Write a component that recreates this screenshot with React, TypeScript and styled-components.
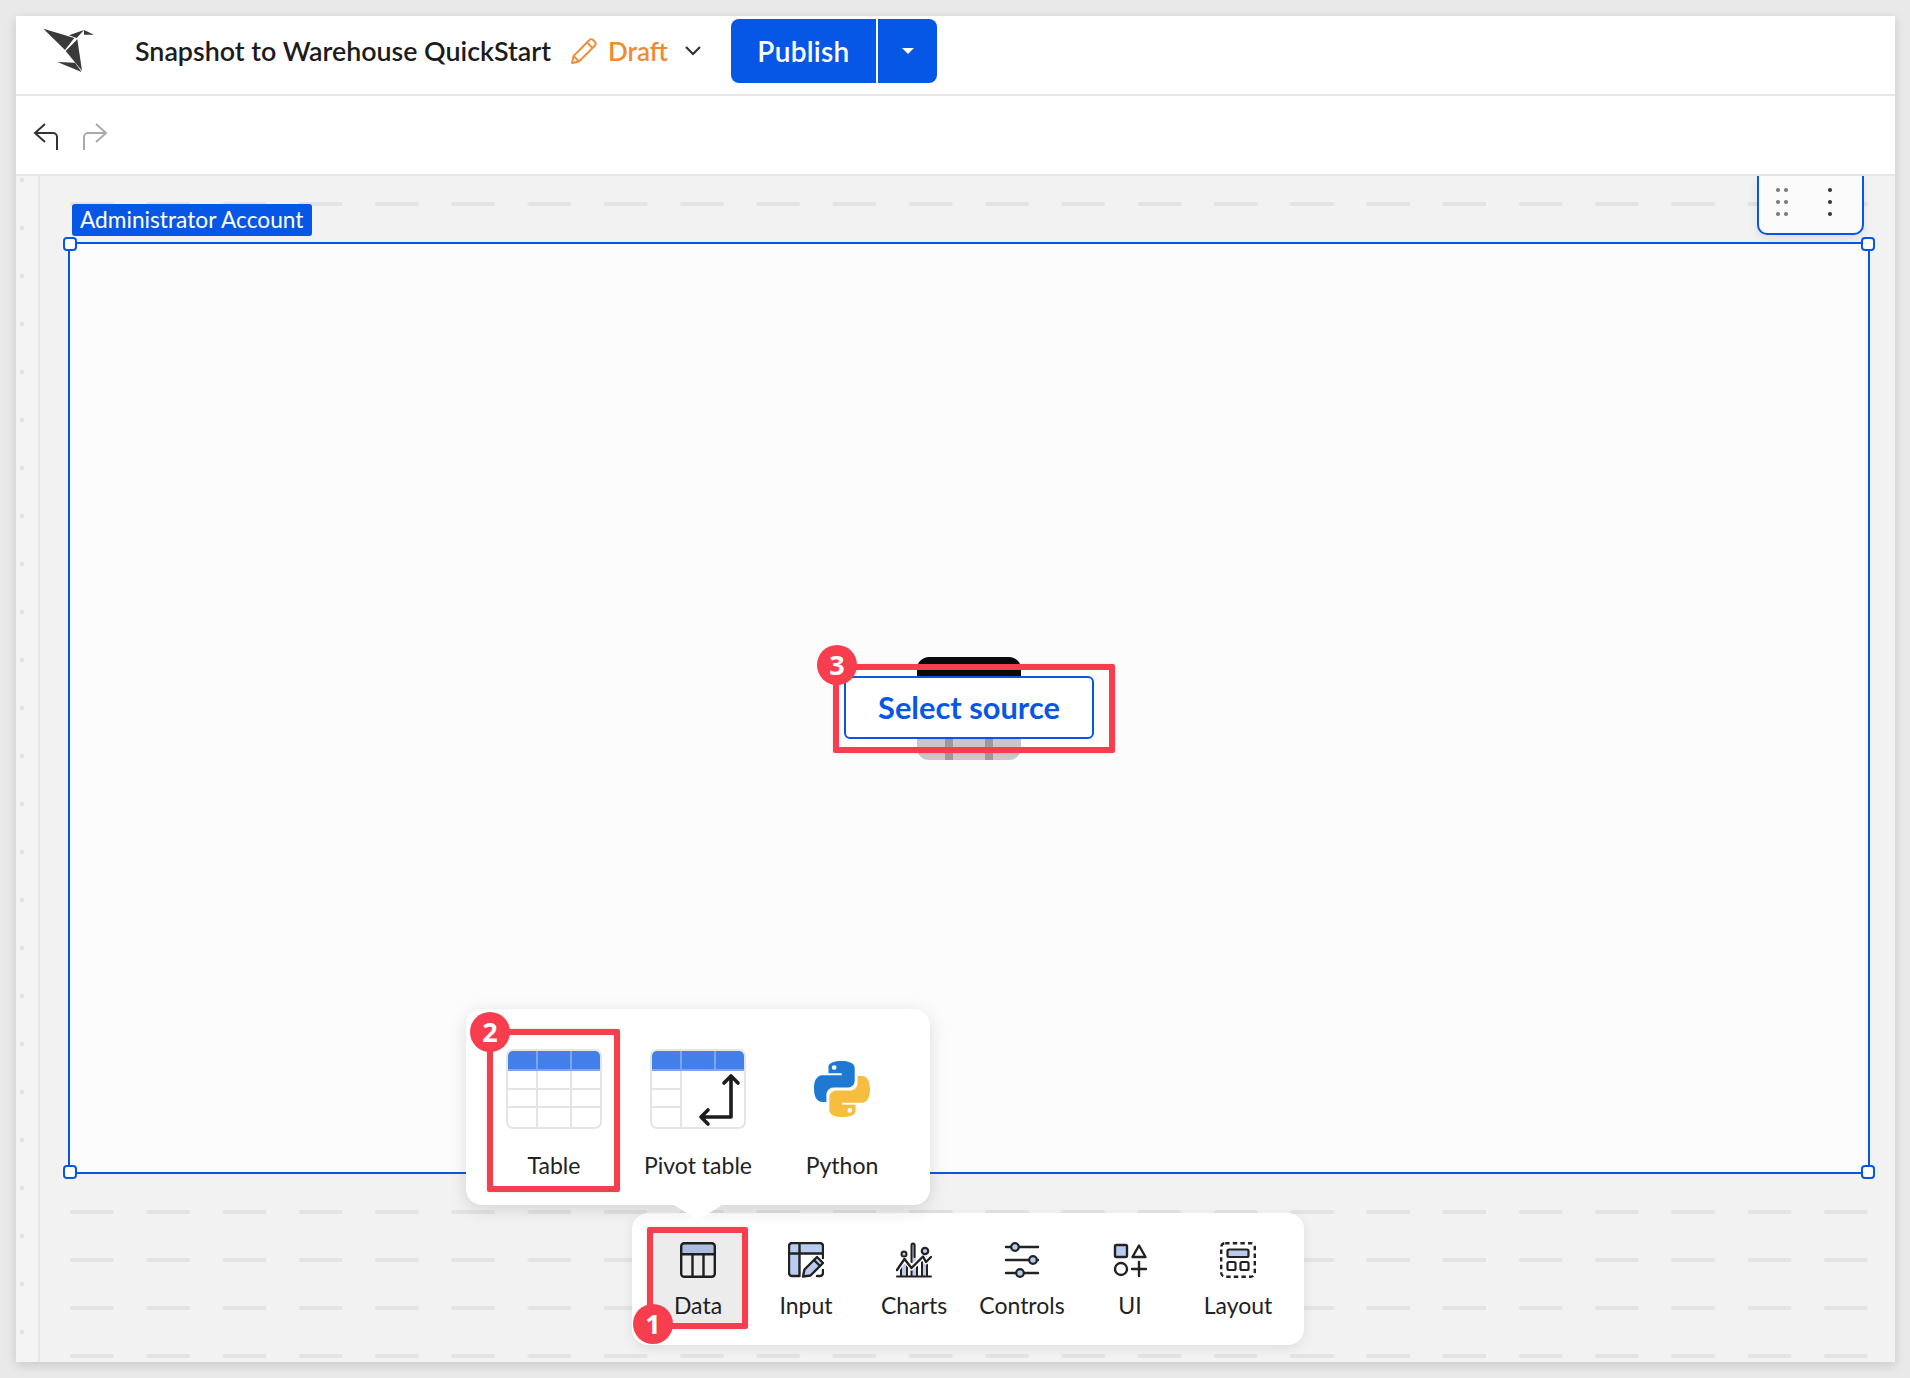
import React from "react";
import styled, { createGlobalStyle } from "styled-components";

const FONT = `"Lato", "Noto Sans", "Liberation Sans", sans-serif`;
const BLUE = "#0757e6";
const RED = "#f73e4e";
const INK = "#222222";
const TINT = "#b9ccf0";

const Global = createGlobalStyle`
  html, body { margin: 0; padding: 0; background: #e9e9e9; }
  body { font-family: ${FONT}; color: ${INK}; }
`;

const Page = styled.div`
  box-sizing: border-box;
  width: 1910px;
  height: 1378px;
  padding: 16px 15px 16px 16px;
`;
const Frame = styled.div`
  display: flex;
  flex-direction: column;
  height: 100%;
  background: #fff;
  box-shadow: 0 3px 10px rgba(0, 0, 0, 0.14);
`;
const Header = styled.header`
  box-sizing: border-box;
  display: flex;
  align-items: center;
  flex: none;
  height: 80px;
  padding: 0 0 8px 24px;
  border-bottom: 2px solid #e6e6e6;
`;
const Logo = styled.svg`
  width: 57px;
  height: 50px;
  margin-right: 38px;
`;
const Title = styled.h1`
  margin: 0;
  width: 416px;
  font-size: 26.8px;
  font-weight: 600;
  color: #1c1c1c;
  white-space: nowrap;
`;
const Pencil = styled.svg`
  width: 28px;
  height: 28px;
  margin-left: 19px;
`;
const Draft = styled.span`
  margin-left: 10px;
  width: 60px;
  font-size: 26px;
  font-weight: 600;
  color: #f08a35;
`;
const Chevron = styled.svg`
  width: 18px;
  height: 12px;
  margin-left: 16px;
`;
const PublishGroup = styled.div`
  display: flex;
  height: 64px;
  margin-left: 29px;
  border-radius: 8px;
  overflow: hidden;
  background: ${BLUE};
`;
const PublishButton = styled.button`
  width: 145px;
  border: 0;
  background: none;
  color: #fff;
  font: 600 28px ${FONT};
  letter-spacing: 0.3px;
`;
const PublishCaret = styled.button`
  display: flex;
  align-items: center;
  justify-content: center;
  width: 61px;
  padding: 0;
  border: 0;
  border-left: 2px solid #fff;
  background: none;
  &::after {
    content: "";
    border: 6px solid transparent;
    border-top-color: #fff;
    border-bottom-width: 0;
  }
`;
const ToolBar = styled.div`
  box-sizing: border-box;
  display: flex;
  align-items: center;
  flex: none;
  gap: 23px;
  height: 80px;
  padding-left: 17px;
  border-bottom: 2px solid #e6e6e6;
`;
const HistoryIcon = styled.svg`
  width: 26px;
  height: 28px;
  margin-top: 4px;
`;
const Canvas = styled.main`
  position: relative;
  display: flex;
  flex: 1;
  min-height: 0;
  background: #f2f2f2;
`;
const GridLayer = styled.svg`
  position: absolute;
  top: 0;
  left: 0;
  width: 1828px;
  height: 100%;
`;
const Ruler = styled.div`
  flex: none;
  width: 22px;
  border-right: 2px solid #e6e6e6;
  background-color: #f4f4f4;
  background-image: radial-gradient(circle at 6px 4px, #e3e3e3 2px, transparent 2.6px);
  background-size: 22px 48px;
`;
const CanvasBody = styled.div`
  position: relative;
  flex: 1;
  padding: 66px 25px 0 28px;
`;
const Card = styled.section`
  position: relative;
  box-sizing: border-box;
  display: flex;
  align-items: center;
  justify-content: center;
  height: 932px;
  background: #fcfcfc;
  border: 2px solid ${BLUE};
`;
const AccountTag = styled.div`
  position: absolute;
  top: -40px;
  left: 2px;
  box-sizing: border-box;
  width: 240px;
  height: 32px;
  padding-left: 8px;
  line-height: 31px;
  font-size: 22.7px;
  color: #fff;
  background: ${BLUE};
  border-radius: 3px;
  white-space: nowrap;
`;
const Handle = styled.span<{ $v: "top" | "bottom"; $h: "left" | "right" }>`
  position: absolute;
  ${(p) => p.$v}: -7px;
  ${(p) => p.$h}: -7px;
  box-sizing: border-box;
  width: 14px;
  height: 14px;
  background: #fff;
  border: 2px solid ${BLUE};
  border-radius: 4px;
`;
const DragTab = styled.div`
  position: absolute;
  top: -68px;
  right: 4px;
  box-sizing: border-box;
  width: 107px;
  height: 59px;
  background: #fbfbfb;
  border: 2px solid ${BLUE};
  border-top: 0;
  border-radius: 0 0 10px 10px;
  box-shadow: 0 4px 10px rgba(0, 0, 0, 0.08);
`;
const DragIcon = styled.svg`
  display: block;
  width: 103px;
  height: 57px;
`;
const SourceWrap = styled.div`
  position: relative;
  width: 250px;
  height: 63px;
  margin-top: -2px;
`;
const SourceArt = styled.svg`
  position: absolute;
  top: -19px;
  left: 73px;
  width: 104px;
  height: 103px;
`;
const SourceButton = styled.button`
  position: relative;
  box-sizing: border-box;
  width: 100%;
  height: 100%;
  padding: 0;
  background: #fff;
  border: 2px solid ${BLUE};
  border-radius: 6px;
  color: ${BLUE};
  font: 700 30.8px ${FONT};
`;
const Mark = styled.div<{ $l: number; $t: number; $w: number; $h: number; $tint?: boolean }>`
  position: absolute;
  left: ${(p) => p.$l}px;
  top: ${(p) => p.$t}px;
  width: ${(p) => p.$w}px;
  height: ${(p) => p.$h}px;
  box-sizing: border-box;
  border: 6px solid ${RED};
  border-radius: 2px;
  background: ${(p) => (p.$tint ? "rgba(0,0,0,0.075)" : "transparent")};
  box-shadow: 0 0 3px rgba(0, 0, 0, 0.12);
  pointer-events: none;
`;
const Badge = styled.span<{ $l: number; $t: number }>`
  position: absolute;
  left: ${(p) => p.$l}px;
  top: ${(p) => p.$t}px;
  width: 40px;
  height: 40px;
  border-radius: 50%;
  background: ${RED};
  color: #fff;
  font: 700 27px/40px "Open Sans", ${FONT};
  text-align: center;
`;
const Popover = styled.div`
  position: absolute;
  left: 450px;
  top: 833px;
  z-index: 2;
  box-sizing: border-box;
  display: flex;
  width: 464px;
  height: 196px;
  padding: 0 16px;
  background: #fff;
  border-radius: 16px;
  box-shadow: 0 4px 18px rgba(0, 0, 0, 0.13);
  &::after {
    content: "";
    position: absolute;
    left: 208px;
    top: 100%;
    width: 48px;
    height: 15px;
    background: #fff;
    clip-path: polygon(0 0, 100% 0, 50% 100%);
  }
`;
const Tile = styled.div`
  display: flex;
  flex-direction: column;
  align-items: center;
  width: 144px;
  padding-top: 40px;
`;
const TileArt = styled.svg`
  width: 96px;
  height: 80px;
`;
const TileLabel = styled.span`
  margin-top: 21px;
  font-size: 23px;
  line-height: 30px;
  color: #222;
`;
const Dock = styled.nav`
  position: absolute;
  left: 616px;
  top: 1037px;
  z-index: 1;
  box-sizing: border-box;
  display: flex;
  width: 672px;
  height: 132px;
  padding: 12px;
  background: #fff;
  border-radius: 16px;
  box-shadow: 0 3px 12px rgba(0, 0, 0, 0.08);
`;
const DockItem = styled.div`
  position: relative;
  display: flex;
  flex-direction: column;
  align-items: center;
  width: 108px;
  padding-top: 17px;
`;
const DockIcon = styled.svg`
  width: 36px;
  height: 36px;
`;
const DockLabel = styled.span`
  margin-top: 12px;
  font-size: 23px;
  line-height: 30px;
  color: #222;
  white-space: nowrap;
`;

const s = { fill: "none", stroke: INK, strokeWidth: 2.4, strokeLinecap: "round", strokeLinejoin: "round" } as const;

const DataGlyph = () => (
  <DockIcon viewBox="0 0 36 36">
    <rect x="1.2" y="1.2" width="33.6" height="11" fill={TINT} />
    <rect x="1.2" y="1.2" width="33.6" height="33.6" rx="3" {...s} />
    <path d="M1.2 12.2H34.8M12.5 12.2V34.8M23.5 12.2V34.8" {...s} />
  </DockIcon>
);
const InputGlyph = () => (
  <DockIcon viewBox="0 0 36 36">
    <path d="M2 2H34V11H11V34H2Z" fill={TINT} />
    <path d="M11 34H4a3 3 0 0 1-3-3V4a3 3 0 0 1 3-3h28a3 3 0 0 1 3 3v12M1 11.5H34M11.5 1V34M29 34h3a3 3 0 0 0 3-3v-3" {...s} />
    <path d="M15 34.5l1.5-7L29 15l6 6-12.5 12.5Z" fill={TINT} stroke={INK} strokeWidth="2.4" strokeLinejoin="round" />
    <path d="M26 18l6 6" {...s} />
  </DockIcon>
);
const ChartsGlyph = () => (
  <DockIcon viewBox="0 0 36 36">
    <path d="M16 2h4v32h-4ZM26 14h5v20h-5ZM6 22h5v12H6Z" fill={TINT} />
    <path d="M15.5 20V3a1.5 1.5 0 0 1 3 0V15M1 34.5H35M5 24V34M11 24V34M15.5 25V34M21 25V34M26 20V34M31 20V34" {...s} strokeWidth="2" />
    <path d="M1 28L8.5 17l7 9L27 14.5 30 20l5-5" {...s} stroke="#fff" strokeWidth="5" />
    <path d="M1 28L8.5 17l7 9L27 14.5 30 20l5-5" {...s} />
    <circle cx="29" cy="9" r="3.2" fill={TINT} stroke={INK} strokeWidth="2.2" />
    <circle cx="8" cy="12" r="2.5" fill={TINT} stroke={INK} strokeWidth="2" />
  </DockIcon>
);
const ControlsGlyph = () => (
  <DockIcon viewBox="0 0 36 36">
    <path d="M2 5H34M2 18H34M2 31H34" {...s} />
    <circle cx="11" cy="5" r="3.8" fill={TINT} stroke={INK} strokeWidth="2.2" />
    <circle cx="29" cy="18" r="3.8" fill={TINT} stroke={INK} strokeWidth="2.2" />
    <circle cx="16" cy="31" r="3.8" fill={TINT} stroke={INK} strokeWidth="2.2" />
  </DockIcon>
);
const UiGlyph = () => (
  <DockIcon viewBox="0 0 36 36">
    <rect x="3" y="3" width="12" height="12" rx="1.5" fill={TINT} stroke={INK} strokeWidth="2.4" />
    <path d="M27 3.5l6.5 11.5h-13Z" {...s} />
    <circle cx="9" cy="27" r="6" {...s} />
    <path d="M27 20V34M20 27H34" {...s} />
  </DockIcon>
);
const LayoutGlyph = () => (
  <DockIcon viewBox="0 0 36 36">
    <rect x="1.2" y="1.2" width="33.6" height="33.6" rx="4" {...s} strokeLinecap="butt" strokeDasharray="4.4 3.2" />
    <rect x="7.5" y="7.5" width="21" height="7.5" rx="1.5" fill={TINT} stroke={INK} strokeWidth="2.2" />
    <rect x="7.5" y="20" width="8" height="8" rx="1.5" {...s} strokeWidth="2.2" />
    <rect x="20.5" y="20" width="8" height="8" rx="1.5" {...s} strokeWidth="2.2" />
  </DockIcon>
);

const TableTile = () => (
  <TileArt viewBox="0 0 96 80">
    <rect x="1" y="1" width="94" height="78" rx="6" fill="#fff" stroke="#e4e4e4" strokeWidth="2" />
    <path d="M2 21V7a5 5 0 0 1 5-5h82a5 5 0 0 1 5 5v14Z" fill="#427fe8" />
    <rect x="2" y="20" width="92" height="2" fill="#7ba6f0" />
    <path d="M1 40H95M1 58H95M31 22V79M65 22V79" stroke="#e4e4e4" strokeWidth="2" />
    <path d="M31 2V20M65 2V20" stroke="#7ba6f0" strokeWidth="2" />
  </TileArt>
);
const PivotTile = () => (
  <TileArt viewBox="0 0 96 80">
    <rect x="1" y="1" width="94" height="78" rx="6" fill="#fff" stroke="#e4e4e4" strokeWidth="2" />
    <path d="M2 21V7a5 5 0 0 1 5-5h82a5 5 0 0 1 5 5v14Z" fill="#427fe8" />
    <rect x="2" y="20" width="92" height="2" fill="#7ba6f0" />
    <path d="M1 40H31M1 58H31M31 22V79" stroke="#e4e4e4" strokeWidth="2" />
    <path d="M31 2V20M65 2V20" stroke="#7ba6f0" strokeWidth="2" />
    <path d="M81 28V68H51M74 34l7-7 7 7M58 61l-7 7 7 7" fill="none" stroke="#1c1c1c" strokeWidth="3.6" strokeLinecap="round" strokeLinejoin="round" />
  </TileArt>
);
const PY =
  "M27.5 0C13.6 0 14.5 6 14.5 6v6.3h13.2v1.9H8.9S0 13.2 0 27.3s7.8 13.6 7.8 13.6h4.6v-6.6s-.2-7.8 7.6-7.8h13.3s7.4.1 7.4-7.1V7.3S41.8 0 27.5 0ZM20.2 4.2a2.4 2.4 0 1 1 0 4.8 2.4 2.4 0 0 1 0-4.8Z";
const PythonTile = () => (
  <TileArt viewBox="-20 -12 96 80">
    <path d={PY} fill="#1f78d1" fillRule="evenodd" />
    <path d={PY} fill="#f6bd41" fillRule="evenodd" transform="rotate(180 28 28)" />
  </TileArt>
);

export default function App() {
  return (
    <Page>
      <Global />
      <Frame>
        <Header>
          <Logo viewBox="60 50 171 150" fill="#3a3a3a">
            <path d="M70 58L163 86 135 122Z" />
            <path d="M172 90L186 184 137 125Z" />
            <path d="M112 158L165 160 185 188Z" />
            <path d="M147 78L192 62 170 86Z" />
            <path d="M192 62L222 76 192 76Z" />
          </Logo>
          <Title>Snapshot to Warehouse QuickStart</Title>
          <Pencil viewBox="0 0 28 28" fill="none" stroke="#f08a35" strokeWidth="1.8" strokeLinejoin="round">
            <path d="M2 26l1.5-7L19.5 3a2.5 2.5 0 0 1 3.5 0l2 2a2.5 2.5 0 0 1 0 3.5L9 24.5ZM17 5.5l5.5 5.5M3.5 19L9 24.5" />
          </Pencil>
          <Draft>Draft</Draft>
          <Chevron viewBox="0 0 18 12" fill="none" stroke="#333" strokeWidth="2.2">
            <path d="M2 2l7 7 7-7" />
          </Chevron>
          <PublishGroup>
            <PublishButton>Publish</PublishButton>
            <PublishCaret aria-label="Publish options" />
          </PublishGroup>
        </Header>
        <ToolBar>
          <HistoryIcon viewBox="0 0 26 28" fill="none" stroke="#333" strokeWidth="2">
            <path d="M12 1L2 10l10 9M2 10H20a4 4 0 0 1 4 4V27" />
          </HistoryIcon>
          <HistoryIcon viewBox="0 0 26 28" fill="none" stroke="#aaa" strokeWidth="2">
            <path d="M14 1l10 9-10 9M24 10H6a4 4 0 0 0-4 4V27" />
          </HistoryIcon>
        </ToolBar>
        <Canvas>
          <Ruler />
          <CanvasBody>
            <GridLayer>
              <defs>
                <pattern id="dash" x="30" y="26" width="76.25" height="48" patternUnits="userSpaceOnUse">
                  <rect width="44" height="4" rx="2" fill="#e3e3e3" />
                </pattern>
              </defs>
              <rect width="100%" height="100%" fill="url(#dash)" />
            </GridLayer>
            <Card>
              <AccountTag>Administrator Account</AccountTag>
              <Handle $v="top" $h="left" />
              <Handle $v="top" $h="right" />
              <Handle $v="bottom" $h="left" />
              <Handle $v="bottom" $h="right" />
              <DragTab>
                <DragIcon viewBox="0 0 103 57">
                  <g fill="#777">
                    {[14, 26, 38].map((y) =>
                      [19, 27].map((x) => <circle key={`${x}-${y}`} cx={x} cy={y} r="2" />)
                    )}
                  </g>
                  <g fill="#333">
                    {[14, 26, 38].map((y) => (
                      <circle key={y} cx="71" cy={y} r="2" />
                    ))}
                  </g>
                </DragIcon>
              </DragTab>
              <SourceWrap>
                <SourceArt viewBox="0 0 104 103">
                  <path d="M0 40V12A12 12 0 0 1 12 0H92A12 12 0 0 1 104 12V40Z" fill="#0a0a0a" />
                  <path d="M0 40H104V91A12 12 0 0 1 92 103H12A12 12 0 0 1 0 91Z" fill="#c8c8c8" />
                  <path d="M28 40H36V103H28ZM68 40H76V103H68Z" fill="#9b9b9b" />
                </SourceArt>
                <SourceButton>Select source</SourceButton>
                <Mark $l={-11} $t={-12} $w={282} $h={89} />
                <Badge $l={-27} $t={-31}>3</Badge>
              </SourceWrap>
            </Card>
          </CanvasBody>
          <Popover>
            <Tile>
              <TableTile />
              <TileLabel>Table</TileLabel>
            </Tile>
            <Tile>
              <PivotTile />
              <TileLabel>Pivot table</TileLabel>
            </Tile>
            <Tile>
              <PythonTile />
              <TileLabel>Python</TileLabel>
            </Tile>
            <Mark $l={21} $t={20} $w={133} $h={163} />
            <Badge $l={4} $t={3}>2</Badge>
          </Popover>
          <Dock>
            <DockItem>
              <DataGlyph />
              <DockLabel>Data</DockLabel>
              <Mark $l={3} $t={2} $w={101} $h={102} $tint />
              <Badge $l={-11} $t={79}>1</Badge>
            </DockItem>
            <DockItem>
              <InputGlyph />
              <DockLabel>Input</DockLabel>
            </DockItem>
            <DockItem>
              <ChartsGlyph />
              <DockLabel>Charts</DockLabel>
            </DockItem>
            <DockItem>
              <ControlsGlyph />
              <DockLabel>Controls</DockLabel>
            </DockItem>
            <DockItem>
              <UiGlyph />
              <DockLabel>UI</DockLabel>
            </DockItem>
            <DockItem>
              <LayoutGlyph />
              <DockLabel>Layout</DockLabel>
            </DockItem>
          </Dock>
        </Canvas>
      </Frame>
    </Page>
  );
}
